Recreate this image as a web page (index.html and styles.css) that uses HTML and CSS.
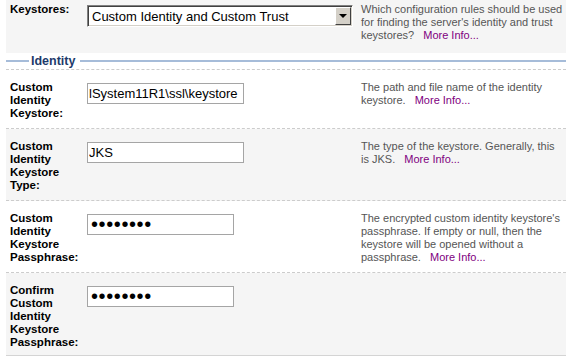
FILE: index.html
```html
<!DOCTYPE html>
<html lang="en">
<head>
    <meta charset="UTF-8">
    <title>Keystores</title>
    <link rel="stylesheet" href="styles.css">
</head>
<body>
    <div class="config-form">
        <div class="form-row shaded first-row">
            <div class="form-label">Keystores:</div>
            <div class="form-field">
                <div class="select-wrap">
                    <select class="select-box">
                        <option>Custom Identity and Custom Trust</option>
                    </select>
                    <span class="select-btn"><span class="select-arrow"></span></span>
                </div>
            </div>
            <div class="form-help">Which configuration rules should be used for finding the server's identity and trust keystores? <a href="#">More Info...</a></div>
        </div>

        <div class="section-title"><span>Identity</span></div>

        <div class="form-row">
            <div class="form-label">Custom Identity Keystore:</div>
            <div class="form-field">
                <input class="text-input" type="text" value="lSystem11R1\ssl\keystore">
            </div>
            <div class="form-help">The path and file name of the identity keystore. <a href="#">More Info...</a></div>
        </div>

        <div class="form-row shaded">
            <div class="form-label">Custom Identity Keystore Type:</div>
            <div class="form-field">
                <input class="text-input" type="text" value="JKS">
            </div>
            <div class="form-help">The type of the keystore. Generally, this is JKS. <a href="#">More Info...</a></div>
        </div>

        <div class="form-row">
            <div class="form-label">Custom Identity Keystore Passphrase:</div>
            <div class="form-field">
                <input class="pass-input" type="password" value="********">
            </div>
            <div class="form-help">The encrypted custom identity keystore's passphrase. If empty or null, then the keystore will be opened without a passphrase. <a href="#">More Info...</a></div>
        </div>

        <div class="form-row shaded last-row">
            <div class="form-label">Confirm Custom Identity Keystore Passphrase:</div>
            <div class="form-field">
                <input class="pass-input" type="password" value="********">
            </div>
            <div class="form-help"></div>
        </div>
    </div>
</body>
</html>
```

FILE: styles.css
```css
body {
    margin: 0;
    background: #ffffff;
    font-family: "Liberation Sans", Arial, sans-serif;
    font-size: 11px;
    color: #000000;
}

.config-form {
    width: 560px;
    margin-left: 6px;
}

.form-row {
    display: grid;
    grid-template-columns: 81px 274px 1fr;
    padding: 11px 0 8px;
    line-height: 13px;
    border-bottom: 1px dashed #cccccc;
}

.form-row.shaded {
    background: #f5f5f5;
}

.form-row.first-row {
    padding: 3px 0 11px;
    border-bottom: none;
}

.form-row.last-row {
    padding-bottom: 6px;
    border-bottom: 1px solid #d4d4d4;
}

.form-label {
    padding-left: 4px;
    font-size: 11.5px;
    font-weight: bold;
}

.form-help {
    color: #555555;
    padding-right: 3px;
}

.form-help a {
    color: #800080;
    text-decoration: none;
    margin-left: 6px;
}

/* dropdown, drawn in the old windows look */
.select-wrap {
    position: relative;
    width: 266px;
    height: 22px;
    margin-top: 2px;
}

.select-box {
    -webkit-appearance: none;
    appearance: none;
    box-sizing: border-box;
    width: 100%;
    height: 100%;
    margin: 0;
    padding: 0 0 0 4px;
    border: 1px solid;
    border-color: #808080 #ffffff #ffffff #808080;
    box-shadow: inset 1px 1px 0 #404040, inset -1px -1px 0 #d4d0c8;
    background: #ffffff;
    font-family: "Liberation Sans", Arial, sans-serif;
    font-size: 13px;
    color: #000000;
    border-radius: 0;
}

.select-btn {
    position: absolute;
    top: 2px;
    right: 2px;
    bottom: 2px;
    width: 16px;
    box-sizing: border-box;
    background: #d4d0c8;
    border: 1px solid;
    border-color: #ffffff #404040 #404040 #ffffff;
    display: flex;
    align-items: center;
    justify-content: center;
}

.select-arrow {
    width: 0;
    height: 0;
    border-left: 4px solid transparent;
    border-right: 4px solid transparent;
    border-top: 4px solid #000000;
}

.text-input,
.pass-input {
    box-sizing: border-box;
    height: 21px;
    margin: 2px 0 0;
    padding: 1px 1px;
    border: 1px solid #a5a5a5;
    background: #ffffff;
    font-family: "Liberation Sans", Arial, sans-serif;
    font-size: 13px;
    color: #000000;
    outline: none;
}

.text-input {
    width: 157px;
}

.pass-input {
    width: 147px;
    padding: 0 0 0 3px;
    font-size: 20px;
    letter-spacing: 0.6px;
}

.section-title {
    display: flex;
    align-items: center;
    height: 16px;
    border-bottom: 1px dashed #cccccc;
}

.section-title::before,
.section-title::after {
    content: '';
    height: 2px;
    background: #a6bcd9;
}

.section-title::before {
    width: 23px;
}

.section-title::after {
    flex: 1;
}

.section-title span {
    padding: 0 5px 0 2px;
    font-size: 12.5px;
    font-weight: bold;
    color: #1d3a6b;
}
```
